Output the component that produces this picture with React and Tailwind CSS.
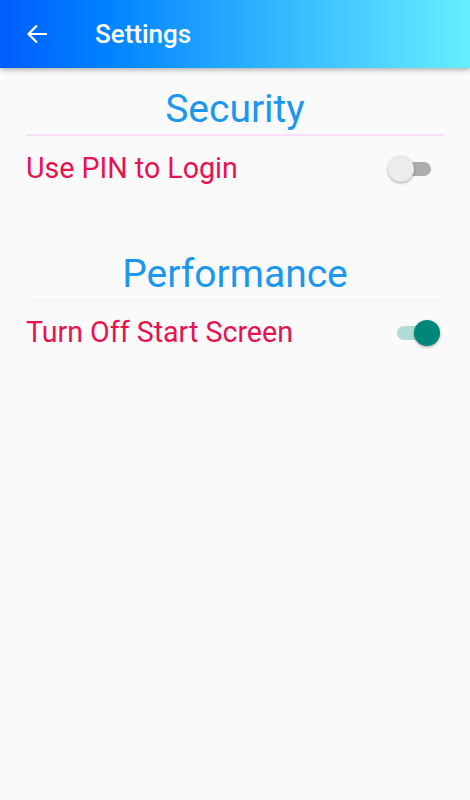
import React, { useState } from 'react';

function Toggle({ on, onChange, className = '' }) {
  return (
    <button
      onClick={() => onChange(!on)}
      className={`relative w-[44px] h-[28px] shrink-0 ${className}`}
    >
      <span
        className={`absolute left-[1px] right-[1px] top-[7px] h-[14px] rounded-full ${on ? 'bg-[#b2dcd8]' : 'bg-[#adadad]'}`}
      />
      <span
        className={`absolute top-[1px] w-[26px] h-[26px] rounded-full shadow-[0_1px_3px_rgba(0,0,0,0.35)] ${on ? 'right-0 bg-[#00877a]' : 'left-0 bg-[#ececec]'}`}
      />
    </button>
  );
}

export default function App() {
  const [usePin, setUsePin] = useState(false);
  const [noStart, setNoStart] = useState(true);

  return (
    <div className="min-h-[800px] bg-[#fafafa] font-['Roboto',sans-serif]">
      <header className="h-[68px] flex items-center bg-gradient-to-r from-[#005cff] to-[#66eeff] shadow-[0_2px_5px_rgba(0,0,0,0.3)]">
        <button className="w-[22px] h-[22px] ml-[26px] text-white">
          <svg viewBox="0 0 22 22" width="22" height="22" fill="none" stroke="currentColor" strokeWidth="2.2">
            <path d="M21 11H2.5M11 2.5L2.5 11l8.5 8.5" />
          </svg>
        </button>
        <h1 className="ml-[47px] text-white text-[26px] font-medium leading-none">Settings</h1>
      </header>

      <main className="px-[26px]">
        <h2 className="mt-[20px] text-center text-[39px] leading-[42px] text-[#1b97f0]">Security</h2>
        <div className="mt-[4px] h-[2px] bg-[#fbdff8]" />
        <div className="h-[66px] flex items-center justify-between">
          <span className="text-[28.6px] leading-[34px] text-[#e8124f] -mt-[2px]">Use PIN to Login</span>
          <Toggle on={usePin} onChange={setUsePin} className="mr-[12px]" />
        </div>

        <h2 className="mt-[51px] text-center text-[39px] leading-[42px] text-[#1b97f0]">Performance</h2>
        <div className="mt-[5px] h-[1px] bg-[#f6efef]" />
        <div className="h-[64px] flex items-center justify-between">
          <span className="text-[28.6px] leading-[34px] text-[#e8124f] -mt-[2px]">Turn Off Start Screen</span>
          <Toggle on={noStart} onChange={setNoStart} className="mr-[4px]" />
        </div>
      </main>
    </div>
  );
}
